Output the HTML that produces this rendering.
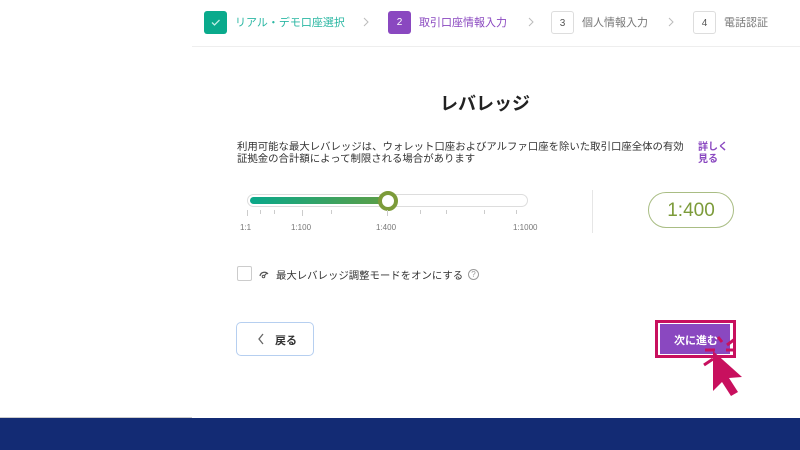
<!DOCTYPE html>
<html><head><meta charset="utf-8"><style>
*{margin:0;padding:0;box-sizing:border-box}
body{width:800px;height:450px;position:relative;background:#fff;font-family:"Liberation Sans","Noto Sans CJK JP",sans-serif;overflow:hidden;color:#333}
.a{position:absolute;white-space:nowrap}
.step{position:absolute;top:11px;width:23px;height:23px;border-radius:3px;font-size:10px;text-align:center;line-height:23px}
.lbl{position:absolute;top:14px;font-size:11px}
.chev{position:absolute;top:17px}
.tick{position:absolute;top:210px;width:1px;height:4px;background:#ccc}
</style></head><body>
<div class="a" style="left:192px;top:46px;width:608px;height:1px;background:#eee"></div>
<div class="step" style="left:204px;background:#0aaa8c;color:#fff">
<svg width="23" height="23"><path d="M8 11.5l2.5 2.5 5-5" stroke="#bfeee5" stroke-width="1.3" fill="none"/></svg></div>
<div class="lbl" style="left:235px;color:#2bb7a3">リアル・デモ口座選択</div>
<svg class="chev" style="left:362px" width="8" height="10"><path d="M2 1l4 4-4 4" stroke="#bbb" fill="none"/></svg>
<div class="step" style="left:388px;background:#8a48c0;color:#fff">2</div>
<div class="lbl" style="left:419px;color:#8a48c0">取引口座情報入力</div>
<svg class="chev" style="left:527px" width="8" height="10"><path d="M2 1l4 4-4 4" stroke="#bbb" fill="none"/></svg>
<div class="step" style="left:551px;border:1px solid #ddd;color:#555">3</div>
<div class="lbl" style="left:582px;color:#777">個人情報入力</div>
<svg class="chev" style="left:667px" width="8" height="10"><path d="M2 1l4 4-4 4" stroke="#bbb" fill="none"/></svg>
<div class="step" style="left:693px;border:1px solid #ddd;color:#555">4</div>
<div class="lbl" style="left:724px;color:#777">電話認証</div>

<div class="a" style="left:440px;top:90px;font-size:18px;font-weight:bold;color:#222">レバレッジ</div>
<div class="a" style="left:237px;top:142px;font-size:10.4px;line-height:12px;color:#333">利用可能な最大レバレッジは、ウォレット口座およびアルファ口座を除いた取引口座全体の有効<br>証拠金の合計額によって制限される場合があります</div>
<div class="a" style="left:698px;top:142px;font-size:10px;line-height:12px;color:#8a48c0;font-weight:bold">詳しく<br>見る</div>

<div class="a" style="left:247px;top:194px;width:281px;height:13px;border:1px solid #ddd;border-radius:7px"></div>
<div class="a" style="left:250px;top:197px;width:138px;height:7px;border-radius:4px;background:linear-gradient(90deg,#0aa88a,#5d9e45)"></div>
<div class="a" style="left:378px;top:191px;width:20px;height:20px;border-radius:50%;border:4px solid #7c9b3a;background:#fff"></div>
<div class="tick" style="left:247px;height:6px"></div>
<div class="tick" style="left:260px"></div><div class="tick" style="left:274px"></div>
<div class="tick" style="left:302px;height:6px"></div><div class="tick" style="left:331px"></div>
<div class="tick" style="left:387px;height:6px"></div><div class="tick" style="left:420px"></div>
<div class="tick" style="left:446px"></div><div class="tick" style="left:484px"></div>
<div class="tick" style="left:516px"></div>
<div class="a" style="left:240px;top:223px;font-size:8px;color:#777">1:1</div>
<div class="a" style="left:291px;top:223px;font-size:8px;color:#777">1:100</div>
<div class="a" style="left:376px;top:223px;font-size:8px;color:#777">1:400</div>
<div class="a" style="left:513px;top:223px;font-size:8px;color:#777">1:1000</div>
<div class="a" style="left:592px;top:190px;width:1px;height:43px;background:#e6e6e6"></div>
<div class="a" style="left:648px;top:192px;width:86px;height:36px;border:1.5px solid #a9bd84;border-radius:18px;font-size:19px;color:#7c9b3a;text-align:center;line-height:35px">1:400</div>

<div class="a" style="left:237px;top:266px;width:15px;height:15px;border:1px solid #ccc;border-radius:2px"></div>
<svg class="a" style="left:258px;top:268px" width="12" height="12"><path d="M2 8a4.5 4.5 0 0 1 8-2M6 8l3-3" stroke="#555" stroke-width="1.2" fill="none"/><circle cx="5.5" cy="8.5" r="1.3" fill="none" stroke="#555"/></svg>
<div class="a" style="left:276px;top:267px;font-size:10.4px;color:#333">最大レバレッジ調整モードをオンにする</div>
<div class="a" style="left:468px;top:269px;width:11px;height:11px;border:1px solid #999;border-radius:50%;font-size:8px;text-align:center;line-height:9px;color:#999">?</div>

<div class="a" style="left:236px;top:322px;width:78px;height:34px;border:1.5px solid #b6cff0;border-radius:5px"></div>
<svg class="a" style="left:257px;top:333px" width="8" height="12"><path d="M6 1l-4 5 4 5" stroke="#666" stroke-width="1.3" fill="none"/></svg>
<div class="a" style="left:275px;top:332px;font-size:11px;font-weight:bold;color:#333">戻る</div>

<div class="a" style="left:655px;top:320px;width:81px;height:38px;border:3px solid #c8105e;background:#fff"></div>
<div class="a" style="left:660px;top:324px;width:70px;height:30px;background:#8a48c0"></div>
<div class="a" style="left:674px;top:332px;font-size:11px;font-weight:bold;color:#fff">次に進む</div>
<svg class="a" style="left:695px;top:325px" width="60" height="75">
<path d="M23 12l4 5M10 25h10M31 25h10M9 40l9-6M40 14l-8 6" stroke="#c8105e" stroke-width="3"/>
<path d="M18 26l0 40 9-9 9 14 7-4-9-14 13-1z" fill="#c8105e"/></svg>

<div class="a" style="left:0;top:417px;width:192px;height:1px;background:#ccc"></div>
<div class="a" style="left:0;top:418px;width:800px;height:32px;background:#132b74"></div>
</body></html>
